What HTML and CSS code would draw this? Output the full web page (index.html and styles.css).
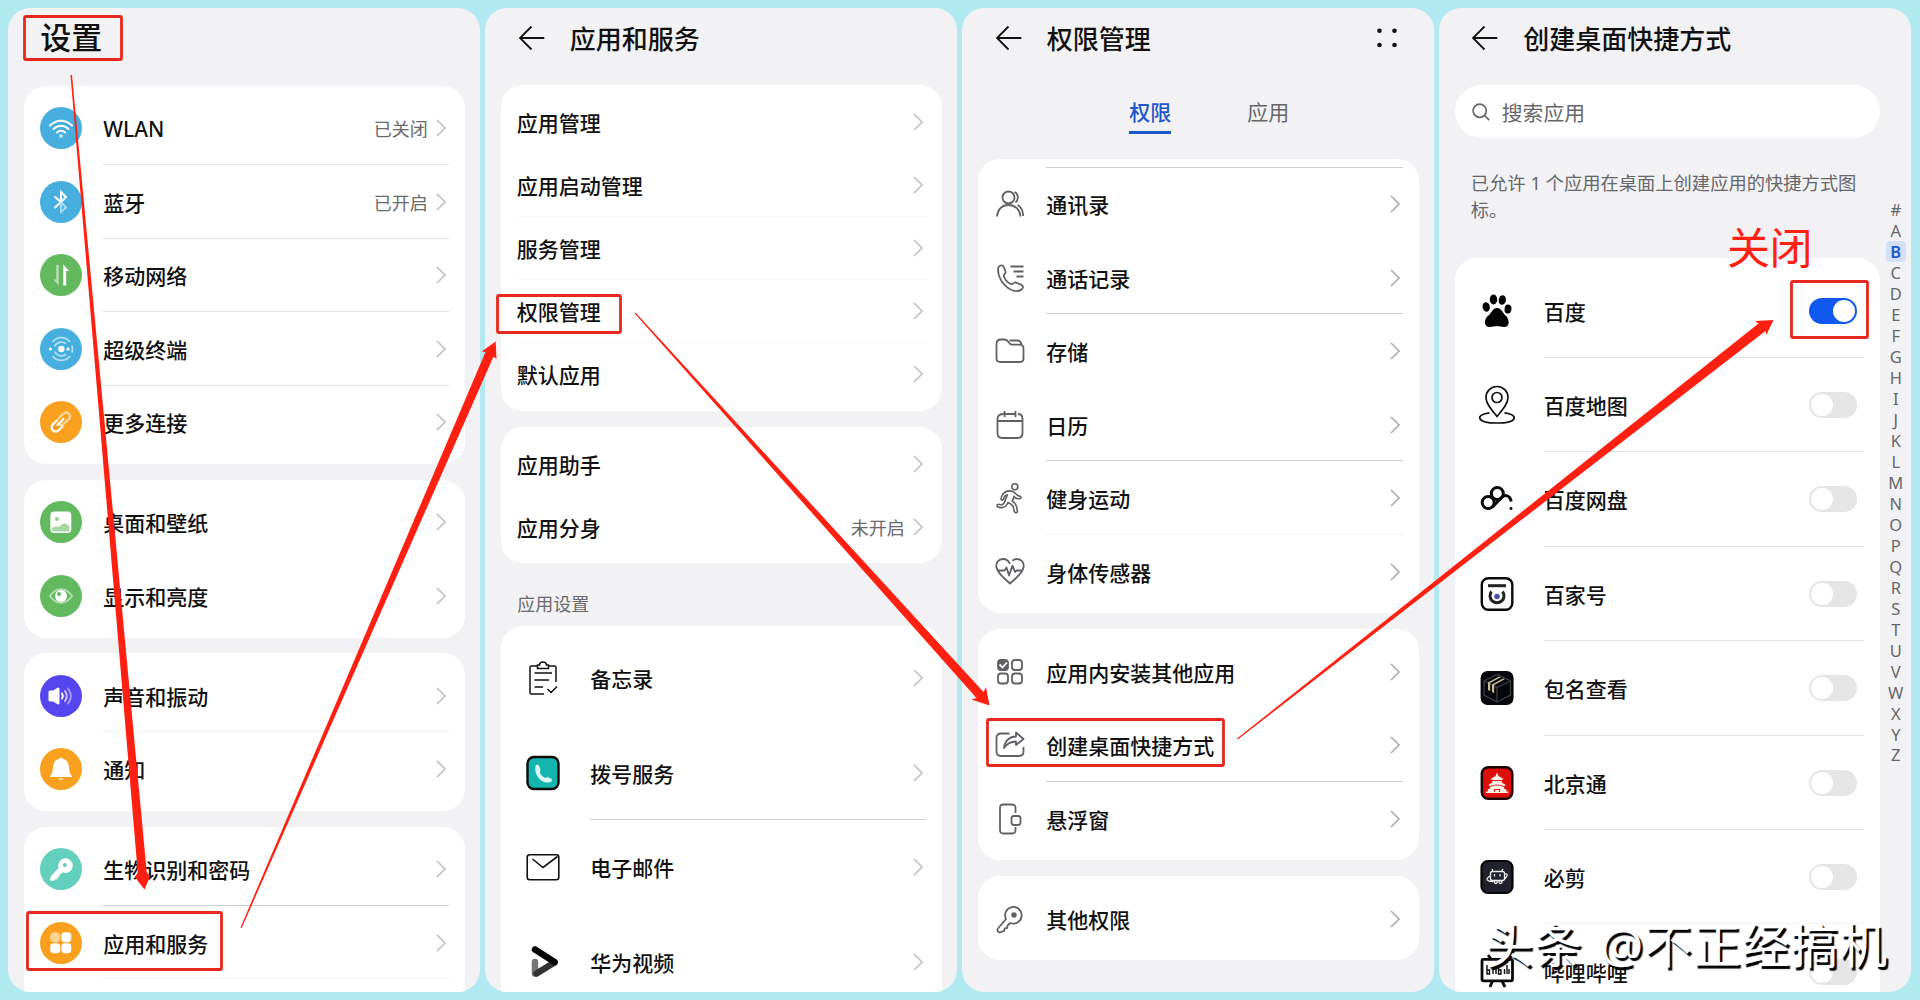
FILE: index.html
```html
<!DOCTYPE html>
<html lang="zh-CN">
<head>
<meta charset="utf-8">
<title>设置</title>
<link rel="stylesheet" href="styles.css">
</head>
<body>
<svg class="sprite" aria-hidden="true">
  <symbol id="chev" viewBox="0 0 10 18"><path d="M1 1l8 8-8 8" fill="none" stroke="currentColor" stroke-width="1.7"/></symbol>
  <symbol id="back" viewBox="0 0 26 26"><path d="M25.3 13H1M12.5 1.5L1 13l11.500 11.500" fill="none" stroke="#111" stroke-width="1.8"/></symbol>
</svg>
<main class="stage">

<section class="panel">
  <header class="bar bar-home"><h1 class="home-title">设置</h1></header>
  <div class="card">
    <div class="row"><span class="disc blue"><svg viewBox="0 0 42 42" fill="none" stroke="#fff" stroke-width="2" stroke-linecap="round"><path d="M10 18.500c6.500-6.500 15.500-6.500 22 0M13.500 22c4.500-4.300 10.500-4.300 15 0M17 25.500c2.500-2.200 5.500-2.200 8 0"/><circle cx="21" cy="29" r="1.600" fill="#b9e2f6" stroke="#b9e2f6" stroke-width="1"/></svg></span><div class="body line"><span class="label">WLAN</span><span class="value">已关闭</span><svg class="chev"><use href="#chev"/></svg></div></div>
    <div class="row"><span class="disc blue"><svg viewBox="0 0 42 42" fill="none" stroke="#fff" stroke-width="2"><path d="M21 21l5-5-5-5v10M14.500 15.500L21 21l-6.500 6"/><path d="M21 21l5 5.500-5 4.500V21" stroke="#a9daf2"/></svg></span><div class="body line"><span class="label">蓝牙</span><span class="value">已开启</span><svg class="chev"><use href="#chev"/></svg></div></div>
    <div class="row"><span class="disc green"><svg viewBox="0 0 42 42"><path d="M18.800 11v20.500L13 25.500h3.200V11z" fill="#b5dfb2"/><path d="M23.200 31.500V10.500l6 6.500h-3v14.500z" fill="#fff"/></svg></span><div class="body line"><span class="label">移动网络</span><svg class="chev"><use href="#chev"/></svg></div></div>
    <div class="row"><span class="disc blue"><svg viewBox="0 0 42 42" fill="none" stroke="#b4e0f5" stroke-width="1.800"><path d="M12.500 14a11 11 0 0 1 17.500 0M12.500 28a11 11 0 0 0 17.500 0M14.800 18.500a7 7 0 0 1 11-2.800M14.800 23.500a7 7 0 0 0 11 2.800M32 17.500q1 3.500 0 7"/><circle cx="21.300" cy="21" r="3.200" fill="#fff" stroke="none"/><circle cx="10.500" cy="21" r="1.600" fill="#fff" stroke="none"/><circle cx="28" cy="21" r="1.600" fill="#fff" stroke="none"/></svg></span><div class="body line"><span class="label">超级终端</span><svg class="chev"><use href="#chev"/></svg></div></div>
    <div class="row"><span class="disc orange"><svg viewBox="0 0 42 42" fill="none" stroke-width="2.200" stroke-linecap="round"><path d="M19 17l4.200-4.200c4-3.600 9 1.200 5.500 5.400L24 22.500c-2 2-4.500 2-6 .5" stroke="#ffdca3"/><path d="M23.500 18l-6 6M22.500 25.500l-3.700 3.700c-4 3.600-9.500-1.200-6-5.700l4.200-4.200" stroke="#fff"/></svg></span><div class="body"><span class="label">更多连接</span><svg class="chev"><use href="#chev"/></svg></div></div>
  </div>
  <div class="card">
    <div class="row"><span class="disc green"><svg viewBox="0 0 42 42"><rect x="10.300" y="10.500" width="21" height="21.500" rx="4" fill="#fff"/><circle cx="17" cy="18" r="2" fill="#8fce8b"/><path d="M12 27c2.500-1 4-1.500 6-1 2 .3 3-3.500 6.500-3.500 3 0 3.500 2.500 5 3v3.500q0 1.500-1.500 1.500H14q-2 0-2-2z" fill="#a5d8a1"/></svg></span><div class="body"><span class="label">桌面和壁纸</span><svg class="chev"><use href="#chev"/></svg></div></div>
    <div class="row"><span class="disc green"><svg viewBox="0 0 42 42"><path d="M10 21c6-9 16-9 22 0-6 9-16 9-22 0z" fill="none" stroke="#b5dfb2" stroke-width="1.800"/><circle cx="21" cy="21" r="6" fill="#fff"/><circle cx="19" cy="19" r="2" fill="#63b95d"/></svg></span><div class="body"><span class="label">显示和亮度</span><svg class="chev"><use href="#chev"/></svg></div></div>
  </div>
  <div class="card">
    <div class="row"><span class="disc violet"><svg viewBox="0 0 42 42"><path d="M8.500 17q0-1.500 1.500-1.500h3l4.500-2.800q2-1 2 1.300v14q0 2.300-2 1.300L13 26.500h-3q-1.500 0-1.500-1.500z" fill="#fff"/><g fill="none" stroke-width="1.900" stroke-linecap="round"><path d="M22 18.500q1.600 2.500 0 5" stroke="#fff"/><path d="M25 16q3.500 5 0 10" stroke="#d0c8ff"/><path d="M28 13.500q6 7.500 0 15" stroke="#a79bff"/></g></svg></span><div class="body line soft"><span class="label">声音和振动</span><svg class="chev"><use href="#chev"/></svg></div></div>
    <div class="row"><span class="disc orange"><svg viewBox="0 0 42 42"><path d="M21 9.500q1.800 0 2.200 1.600c4 1 5.500 4 5.800 8l.6 5.400 2.200 3.500v1H10.200v-1l2.200-3.500.6-5.400c.3-4 1.800-7 5.800-8Q19.200 9.500 21 9.500z" fill="#fff"/><path d="M18.500 30h5q-.6 2.300-2.500 2.300T18.500 30z" fill="#ffdca3"/></svg></span><div class="body"><span class="label">通知</span><svg class="chev"><use href="#chev"/></svg></div></div>
  </div>
  <div class="card">
    <div class="row"><span class="disc teal"><svg viewBox="0 0 42 42"><path d="M10 32.500l.6-4 8-8.500a7.300 7.300 0 1 1 4 4.300L19 27.800l.3 1.500-2 .3.100 1.700-2 .2-1.800 1.400z" fill="#fff"/><circle cx="24.800" cy="17" r="2" fill="#63cfbd"/></svg></span><div class="body line strong"><span class="label">生物识别和密码</span><svg class="chev"><use href="#chev"/></svg></div></div>
    <div class="row"><span class="disc orange"><svg viewBox="0 0 42 42" fill="#fff"><rect x="10.200" y="10.200" width="10" height="10" rx="4.200" fill="#ffd394"/><rect x="21.300" y="10.200" width="10" height="10" rx="3.600"/><rect x="10.200" y="21.300" width="10" height="10" rx="3.600"/><rect x="21.300" y="21.300" width="10" height="10" rx="3.600"/></svg></span><div class="body line soft"><span class="label">应用和服务</span><svg class="chev"><use href="#chev"/></svg></div></div>
    <div class="row"></div>
  </div>
</section>

<section class="panel short">
  <header class="bar"><svg class="back"><use href="#back"/></svg><h1>应用和服务</h1></header>
  <div class="card plain">
    <div class="row"><div class="body"><span class="label">应用管理</span><svg class="chev"><use href="#chev"/></svg></div></div>
    <div class="row"><div class="body line faint"><span class="label">应用启动管理</span><svg class="chev"><use href="#chev"/></svg></div></div>
    <div class="row"><div class="body line faint"><span class="label">服务管理</span><svg class="chev"><use href="#chev"/></svg></div></div>
    <div class="row"><div class="body line faint"><span class="label">权限管理</span><svg class="chev"><use href="#chev"/></svg></div></div>
    <div class="row"><div class="body"><span class="label">默认应用</span><svg class="chev"><use href="#chev"/></svg></div></div>
  </div>
  <div class="card plain">
    <div class="row"><div class="body"><span class="label">应用助手</span><svg class="chev"><use href="#chev"/></svg></div></div>
    <div class="row"><div class="body"><span class="label">应用分身</span><span class="value">未开启</span><svg class="chev"><use href="#chev"/></svg></div></div>
  </div>
  <h2 class="group">应用设置</h2>
  <div class="card tall">
    <div class="row"><svg class="app" viewBox="0 0 40 40" fill="none" stroke="#111" stroke-width="1.500"><path d="M14.500 8H8.500Q7 8 7 9.500v25Q7 36 8.500 36H21M25.500 8h6Q33 8 33 9.500V24M14.500 8v-1h2c.3-4 6.700-4 7 0h2v3.500h-11zM11.500 15h17.500M11.500 22h14.500M11.500 29h8.500M24.500 31l3.500 3.500 6-6"/></svg><div class="body"><span class="label">备忘录</span><svg class="chev"><use href="#chev"/></svg></div></div>
    <div class="row"><svg class="app" viewBox="0 0 40 40"><rect x="4.500" y="4" width="31" height="32" rx="6.500" fill="#14b5ae" stroke="#0a0a0a" stroke-width="2.400"/><path d="M12.500 13c1-1.800 3-1.500 3.700.3l1.300 3.200c.6 1.300-1 1.900-.6 3 1 2.500 2.500 4 5 5.200 1.200.5 1.800-1.200 3.200-.6l2.700 1.300c1.700.8 1.500 2.700.1 3.500C19 32 10.500 22.500 12.500 13z" fill="#d9f8f6"/></svg><div class="body line strong"><span class="label">拨号服务</span><svg class="chev"><use href="#chev"/></svg></div></div>
    <div class="row"><svg class="app" viewBox="0 0 40 40" fill="none" stroke="#111" stroke-width="1.600"><rect x="4.200" y="7.700" width="31.600" height="25" rx="2.500"/><path d="M9.500 12l10.500 8.500L34.500 9.500"/></svg><div class="body"><span class="label">电子邮件</span><svg class="chev"><use href="#chev"/></svg></div></div>
    <div class="row"><svg class="app" viewBox="0 0 40 40" fill="none" stroke-width="6.500" stroke-linecap="round" stroke-linejoin="round"><path d="M12 20v11.500" stroke="#777"/><path d="M13.500 31.500L31.500 20.500" stroke="#333"/><path d="M12 7.500l19.500 12.500" stroke="#000"/></svg><div class="body"><span class="label">华为视频</span><svg class="chev"><use href="#chev"/></svg></div></div>
  </div>
</section>

<section class="panel perms">
  <header class="bar"><svg class="back"><use href="#back"/></svg><h1>权限管理</h1><svg class="more" viewBox="0 0 22 22" fill="#111"><circle cx="3.500" cy="3.800" r="2.300"/><circle cx="18.500" cy="3.800" r="2.300"/><circle cx="3.500" cy="18" r="2.300"/><circle cx="18.500" cy="18" r="2.300"/></svg></header>
  <nav class="tabs"><span class="tab on">权限</span><span class="tab">应用</span></nav>
  <div class="card first">
    <div class="row topline"><svg class="glyph" viewBox="0 0 30 30"><circle cx="13.500" cy="8.500" r="6"/><path d="M2 27.500c.5-7 5-11.500 11.500-11.500S25 20.500 25.500 27.500M19.500 3c4 1.500 4.500 7.500 1 10.500M22.500 16c4 2 5.500 6.500 5.700 11"/></svg><div class="body"><span class="label">通讯录</span><svg class="chev"><use href="#chev"/></svg></div></div>
    <div class="row"><svg class="glyph" viewBox="0 0 30 30"><path d="M3.500 4c2-2.500 4.500-2 5.500.5l1.500 4c.8 2.200-2.300 3-1.600 5 1.300 3.800 4 6.300 7.300 7.600 2 .7 2.500-2.400 4.800-1.500l5 2c2.500 1 2.500 3.500.5 5C15.500 33 .5 16 3.500 4zM15.500 3.500h13M18.500 8.500h10M21.500 13.500h7"/></svg><div class="body line strong"><span class="label">通话记录</span><svg class="chev"><use href="#chev"/></svg></div></div>
    <div class="row"><svg class="glyph" viewBox="0 0 30 30"><path d="M1.500 22.500V8c0-3 1.500-4.500 4.500-4.500h3.500c2 0 3 1 3.800 2.200 1 1.700 1.700 3 3.700 3h7.500c2.700 0 4 1.500 4 4v9.800c0 3-1.500 3.500-4 3.500h-19c-2.700 0-4-1-4-3.500zM14.500 4.500h8c2 0 3.500 1.500 4 4"/></svg><div class="body"><span class="label">存储</span><svg class="chev"><use href="#chev"/></svg></div></div>
    <div class="row"><svg class="glyph" viewBox="0 0 30 30"><path d="M8.500 4c-4 0-6 1.500-6 5v14c0 3.500 1.500 5 5 5h15c3.500 0 5-1.500 5-5V9c0-3.500-1.500-5-4.500-5M9 4h11.500M2.500 11h25M9.500 1v6M20.500 1v6"/></svg><div class="body line strong"><span class="label">日历</span><svg class="chev"><use href="#chev"/></svg></div></div>
    <div class="row"><svg class="glyph thin" viewBox="0 0 30 30"><circle cx="19.800" cy="3.800" r="3"/><path d="M18 8.500c-4-1.300-8 0-10 2.500-1 1.500-2 4-2 5 .3 1.500 2 1.500 2.500 0 .8-2.500 2-4 4-4.200-1 2.500-2.500 5-2.700 7-1 2.700-2.500 3.400-5 2.700-2-.7-3.500 1-2.500 2 2.700 2 8 1.500 10-2.500l.8-1.500c3.500 1.500 5.500 3 5.500 6 .3 2.500 1 4 2 4.300 1.300.3 2-.8 1.700-2-.3-4.500-1.500-7.500-5-9.500l1.700-5c1 2 3 2.700 6 2.300 1.500-.3 1.500-2 0-2.300-3.500-.3-4-3-7-4.800z"/></svg><div class="body line soft"><span class="label">健身运动</span><svg class="chev"><use href="#chev"/></svg></div></div>
    <div class="row"><svg class="glyph" viewBox="0 0 30 30"><path d="M15 7c-1.500-3.500-4-5-7-5-4.500 0-7.500 4-6.500 8.500C3 17 9 21 15 26.500 21 21 27 17 28.500 10.500 29.500 6 26.500 2 22 2c-1.700 0-3.200.6-4.500 1.700M2 13.500h7.500l2-3 2.500 8 3.500-10 2.500 6.500 1.500-1.500h6.500"/></svg><div class="body"><span class="label">身体传感器</span><svg class="chev"><use href="#chev"/></svg></div></div>
  </div>
  <div class="card">
    <div class="row"><svg class="glyph" viewBox="0 0 30 30"><rect x="3" y="3" width="10" height="10" rx="3" fill="#606164"/><rect x="17" y="3" width="10" height="10" rx="3"/><rect x="3" y="16.500" width="10" height="10" rx="3"/><rect x="17" y="16.500" width="10" height="10" rx="3"/><path d="M4.500 7.500l3 3L12 5.500" stroke="#fff"/></svg><div class="body"><span class="label">应用内安装其他应用</span><svg class="chev"><use href="#chev"/></svg></div></div>
    <div class="row"><svg class="glyph" viewBox="0 0 30 30"><path d="M14.500 3.500H6c-3 0-4.500 1.500-4.500 4v14c0 3 1.500 4.500 4.500 4.500h18c3 0 4.500-1.500 4.500-4.500V17M9 18c.5-7 5.500-11.500 12-11.500V2.500l7.500 6.500-7.500 6V11.500c-5 0-9 2-12 6.500z"/></svg><div class="body line strong"><span class="label">创建桌面快捷方式</span><svg class="chev"><use href="#chev"/></svg></div></div>
    <div class="row"><svg class="glyph" viewBox="0 0 30 30"><path d="M20.500 9V4c0-2.500-1-3.500-3.500-3.500H8.500C6 .5 5 1.500 5 4v22c0 2.500 1 3.500 3.500 3.500H17c2.500 0 3.500-1 3.500-3.500v-3"/><rect x="16.500" y="12" width="9" height="9" rx="2.500"/></svg><div class="body"><span class="label">悬浮窗</span><svg class="chev"><use href="#chev"/></svg></div></div>
  </div>
  <div class="card">
    <div class="row"><svg class="glyph" viewBox="0 0 30 30"><path d="M11 15A8.300 8.300 0 1 1 15.500 19l-3 2.500-.3 2.500-2.500.3-.5 2.500L7 27.500c-2 1.500-5 1-4.500-2.500z"/><circle cx="19" cy="11" r="1.800" fill="#606164"/></svg><div class="body"><span class="label">其他权限</span><svg class="chev"><use href="#chev"/></svg></div></div>
  </div>
</section>

<section class="panel shortcuts">
  <header class="bar"><svg class="back"><use href="#back"/></svg><h1>创建桌面快捷方式</h1></header>
  <div class="columns">
    <div class="main">
      <div class="search"><svg viewBox="0 0 18 18" fill="none" stroke="#66676a" stroke-width="1.700"><circle cx="7.700" cy="7.700" r="6.600"/><path d="M12.700 12.700l4.500 4.500"/></svg><span>搜索应用</span></div>
      <p class="note">已允许 1 个应用在桌面上创建应用的快捷方式图标。</p>
      <div class="card tall">
        <div class="row"><svg class="app" viewBox="0 0 40 40" fill="#000"><ellipse cx="16.500" cy="8.500" rx="3.700" ry="5"/><ellipse cx="25.300" cy="9" rx="3.600" ry="4.800" transform="rotate(10 25 9)"/><ellipse cx="9.200" cy="16" rx="3.600" ry="4.800" transform="rotate(-12 9 16)"/><ellipse cx="31" cy="18" rx="3.500" ry="4.600" transform="rotate(6 31 18)"/><path d="M20 17c4.500 0 5 4 8.500 7.500 3.800 3 5.200 11.500-1.500 11.500-3 0-4-.7-7-.7s-4.500.7-7 .7c-7 0-6-8.500-1.500-11.500C15.500 21 15.500 17 20 17z"/></svg><div class="body line"><span class="label">百度</span><i class="switch on"></i></div></div>
        <div class="row"><svg class="app" viewBox="0 0 40 40" fill="none" stroke="#111" stroke-width="1.700"><path d="M20 31.500C14 24 9 18.500 9 12.500a11 11 0 0 1 22 0C31 18.500 26 24 20 31.500z"/><circle cx="20" cy="12.500" r="5"/><path d="M12.500 27.800C-2 29.500-1 38 20 38s22-8.500 7.500-10.200"/></svg><div class="body line"><span class="label">百度地图</span><i class="switch"></i></div></div>
        <div class="row"><svg class="app" viewBox="0 0 40 40" fill="none" stroke="#0a0a0a" stroke-width="3"><circle cx="11.200" cy="23.500" r="6"/><circle cx="20.300" cy="14.500" r="6"/><path d="M15.500 28l9-9.500c3.500-3.300 8.500-2.500 9.700 4"/><circle cx="34" cy="29.500" r="1.500" fill="#0a0a0a" stroke="none"/></svg><div class="body line"><span class="label">百度网盘</span><i class="switch"></i></div></div>
        <div class="row"><svg class="app" viewBox="0 0 40 40" fill="none"><rect x="4.800" y="4.200" width="30.500" height="31.500" rx="6.500" fill="#fff" stroke="#0a0a0a" stroke-width="2.400"/><path d="M11 11.700h18" stroke="#222" stroke-width="3"/><path d="M14.500 17.500a7 7 0 1 0 11 0" stroke="#222" stroke-width="3"/><circle cx="20" cy="22.500" r="2.800" fill="#4a4fc0"/></svg><div class="body line"><span class="label">百家号</span><i class="switch"></i></div></div>
        <div class="row"><svg class="app" viewBox="0 0 40 40"><rect x="3.600" y="3" width="33" height="34" rx="7" fill="#05070b"/><g fill="none" stroke="#3a3f47" stroke-width="1.300"><path d="M7 13l13-6.500L33.500 13v14L20 34 7 27zM7 13l13 6.500L33.500 13M20 19.500V34"/></g><path d="M11 14.500l11-6 1.700.8-10.500 5.800v8l-2.200-1zM15 16.500l11-6 1.700.8-10.500 5.800v8l-2.200-1z" fill="#c9bb93"/></svg><div class="body line"><span class="label">包名查看</span><i class="switch"></i></div></div>
        <div class="row"><svg class="app" viewBox="0 0 40 40"><rect x="4.800" y="4.200" width="30.500" height="31.500" rx="6.500" fill="#dd0f0b" stroke="#1a0505" stroke-width="2.400"/><path d="M20 9.500l1.500 3.500 5 3-2 1 .3 2.500 4 2.500-1.800 1.200.3 2.800h2v2.500h2v1.500H8.800V28.500h2V26h2l.3-2.800-1.800-1.200 4-2.500.3-2.500-2-1 5-3z" fill="#fff0e8"/><path d="M15.500 17.500h9M13 23.500q7-3 14 0M17.500 29v-2.500h5V29" fill="none" stroke="#dd2a20" stroke-width="1.200"/></svg><div class="body line"><span class="label">北京通</span><i class="switch"></i></div></div>
        <div class="row"><svg class="app" viewBox="0 0 40 40" fill="none" stroke="#eee" stroke-width="1.300"><rect x="4.500" y="4" width="31" height="32" rx="6.500" fill="#20212c" stroke="#05060a" stroke-width="2.200"/><path d="M15.500 14.500h10q2 0 2 2v5q0 2-2 2h-10q-2 0-2-2v-5q0-2 2-2zM16 14.500l-1-2.500M24.500 14.500l1.500-2.500M13 19c-5 3-3.500 5.500 3.500 5.500M28 17c3.500-1 2.500 3-1 5.500M17.500 17v2.500M23 17v2.500"/><circle cx="18.800" cy="25" r="1.500"/><circle cx="23.500" cy="25" r="1.500"/></svg><div class="body line soft"><span class="label">必剪</span><i class="switch"></i></div></div>
        <div class="row"><svg class="app" viewBox="0 0 40 40" fill="none" stroke="#0a0a0a" stroke-width="2.800"><rect x="5" y="7.300" width="30.500" height="21.500" rx="1.500"/><path d="M14.500 7.500L11 3M26 7.500L29.500 3M15.500 29l-2.500 6M25 29l3 6"/><path d="M10 13v9h2.500v-4H10M16 17v5M19 12v10M21.500 13v9H24v-4h-2.500M27.500 17v5M30 13v9M32 17v5" stroke-width="1.400"/></svg><div class="body"><span class="label">哔哩哔哩</span><i class="switch"></i></div></div>
      </div>
    </div>
    <nav class="rail"><span>#</span><span>A</span><span class="on">B</span><span>C</span><span>D</span><span>E</span><span>F</span><span>G</span><span>H</span><span>I</span><span>J</span><span>K</span><span>L</span><span>M</span><span>N</span><span>O</span><span>P</span><span>Q</span><span>R</span><span>S</span><span>T</span><span>U</span><span>V</span><span>W</span><span>X</span><span>Y</span><span>Z</span></nav>
  </div>
</section>

<svg class="marks" viewBox="0 0 1920 1000">
  <g fill="none" stroke="#e8281f" stroke-width="2.800">
    <rect x="24.500" y="16.500" width="97" height="43" rx="1.500"/>
    <rect x="27.500" y="912.500" width="194" height="57" rx="1.500"/>
    <rect x="497.500" y="295.500" width="123" height="37" rx="1.500"/>
    <rect x="987.500" y="719.500" width="236" height="46" rx="1.500"/>
    <rect x="1791.500" y="281.500" width="76" height="56" rx="1.500"/>
  </g>
  <g fill="#ff2011">
    <path d="M70.500 75h1.500L146.700 872l3.300 4.500-5.500 13L134.800 877l3-3.500z"/>
    <path d="M240.500 927.500l1.200.5L493.500 356.500l3 2.500-.8-17.500-14 10 3.800.5z"/>
    <path d="M634.500 313.300l1-.8L983.500 692l2.500-5 3.500 18.500-18-6 5-1.500z"/>
    <path d="M1237 738.500l.7 1L1765.500 331l.8 4L1773.500 320l-18.500 1 3.500 2.500z"/>
  </g>
</svg>
<span class="callout">关闭</span>
<span class="watermark">头条 @不正经搞机</span>
</main>
</body>
</html>
```
FILE: styles.css
```css
* { box-sizing: border-box; }

body {
  margin: 0;
  background: #b0eaf0;
  color: #111;
  font-family: "Noto Sans", "Noto Sans CJK SC", sans-serif;
}

.sprite { position: absolute; width: 0; height: 0; }

.stage {
  position: relative;
  display: grid;
  grid-template-columns: repeat(4, 472px);
  gap: 5px;
  width: 1920px;
  height: 1000px;
  padding: 8px 8px 8px 8.300px;
  overflow: hidden;
}

.panel {
  display: flex;
  flex-direction: column;
  height: 984px;
  padding: 0 15.500px 0 16px;
  overflow: hidden;
  border-radius: 22px;
  background: #f2f2f4;
}

.bar {
  display: flex;
  flex: none;
  align-items: center;
  height: 77.300px;
  padding: 0 21px 17px 17.500px;
}
.bar-home { height: 78px; padding: 0 16px 19.500px; }
h1 { margin: 2px 0 0; font-size: 26px; font-weight: 500; line-height: 36px; }
.home-title { margin: 0; font-size: 31px; }
.back { width: 26px; height: 26px; margin-right: 25px; }
.more { width: 22px; height: 22px; margin-left: auto; }

.card {
  flex: none;
  margin-bottom: 15.750px;
  padding: 5.600px 16px 5.100px 15.500px;
  border-radius: 22px;
  background: #fff;
}
.row { display: flex; align-items: center; height: 73.500px; }
.plain .row { height: 63px; }
.tall .row { height: 94.450px; }

.body {
  display: flex;
  flex: 1;
  align-items: center;
  height: 100%;
  padding: 1px 3px 0 0;
  border-bottom: 1px solid transparent;
}
.line { border-bottom-color: #e2e2e3; }
.line.strong { border-bottom-color: #cfcfd1; }
.line.soft { border-bottom-color: #f3f3f4; }
.line.faint { border-bottom-color: #f8f8f9; }

.label { margin-top: 2px; font-size: 21px; font-weight: 500; line-height: 30px; }
.value { margin: 2px 8px 0 auto; color: #6a6a6c; font-size: 18px; line-height: 26px; }
.chev { flex: none; width: 10px; height: 18px; color: #c3c3c6; }
.label + .chev { margin-left: auto; }

.disc { flex: none; width: 42px; height: 42px; margin-right: 21.500px; border-radius: 50%; }
.disc svg { display: block; width: 42px; height: 42px; }
.blue { background: #46afe0; }
.green { background: #63b95d; }
.orange { background: #faa01f; }
.violet { background: #5545ee; }
.teal { background: #63cfbd; }

.group {
  flex: none;
  height: 46.500px;
  margin: 0;
  padding: 12px 16px 0;
  color: #6a6a6c;
  font-size: 18px;
  font-weight: 400;
  line-height: 26px;
}
.short > .tall { padding-left: 22px; }
.app { flex: none; width: 40px; height: 40px; margin-right: 27px; }

.perms .chev { color: #aeaeb0; }
.tabs { display: flex; flex: none; gap: 76px; height: 73.700px; padding: 12px 0 0 151px; }
.tab {
  width: 42px;
  height: 37px;
  color: #66676a;
  font-size: 21px;
  line-height: 30px;
}
.tab.on { border-bottom: 3px solid #1f57cc; color: #1f57cc; font-weight: 500; }
.first { padding-top: 8.400px; }
.topline .body { padding-top: 0; border-top: 1px solid #cfcfd1; }
.glyph {
  flex: none;
  width: 30px;
  height: 30px;
  margin: 0 21.500px 0 1px;
  overflow: visible;
  fill: none;
  stroke: #606164;
  stroke-width: 1.800;
  stroke-linejoin: round;
}
.glyph.thin { stroke-width: 1.600; }

.shortcuts { padding-left: 15.500px; }
.columns { display: flex; flex: 1; }
.main { flex: none; width: 425px; }
.search {
  display: flex;
  align-items: center;
  gap: 11.500px;
  height: 53px;
  padding: 0 18px 0 17.500px;
  border-radius: 27px;
  background: #fff;
  color: #66676a;
  font-size: 20.800px;
}
.search svg { width: 18px; height: 18px; }
.note {
  height: 119.500px;
  margin: 0;
  padding: 31px 0 0 16px;
  color: #66676a;
  font-size: 18.300px;
  line-height: 27px;
}
.shortcuts .tall { margin: 0; padding-left: 22px; }
.switch {
  flex: none;
  width: 48px;
  height: 26px;
  margin: 0 4px 0 auto;
  padding: 2px;
  border-radius: 13px;
  background: #e5e5e6;
}
.switch::before {
  display: block;
  width: 22px;
  height: 22px;
  border-radius: 50%;
  background: #fff;
  content: "";
}
.switch.on { background: #1158ee; }
.switch.on::before { margin-left: 22px; }

.rail {
  display: flex;
  flex: none;
  flex-direction: column;
  align-items: center;
  width: 32px;
  padding-top: 114px;
  color: #66676a;
  font-size: 16.500px;
  line-height: 20.980px;
}
.rail span { width: 20px; height: 20.980px; text-align: center; }
.rail .on { border-radius: 4px; background: #d3e0f6; color: #1f57cc; font-weight: 600; }

/* Annotations drawn over the four screens */
.marks { position: absolute; inset: 0; width: 1920px; height: 1000px; }
.callout {
  position: absolute;
  top: 218px;
  left: 1727px;
  color: #ff2011;
  font-size: 43px;
  line-height: 60px;
  letter-spacing: -.5px;
}
.watermark {
  position: absolute;
  top: 910px;
  left: 1485px;
  color: #fff;
  font-size: 48px;
  line-height: 70px;
  letter-spacing: .8px;
  word-spacing: 4px;
  text-shadow: 2.500px 2.500px 1px #000;
  white-space: nowrap;
}
```
